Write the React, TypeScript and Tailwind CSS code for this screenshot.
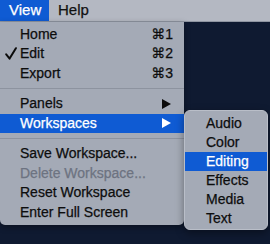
const font = { fontFamily: '"Liberation Sans", "DejaVu Sans", Arial, sans-serif' };

function Arrow({ white }: { white?: boolean }) {
  return (
    <svg width="9" height="10" viewBox="0 0 9 10" aria-hidden>
      <polygon points="0,0 9,5 0,10" fill={white ? "#ffffff" : "#0b0b0b"} />
    </svg>
  );
}

function Check() {
  return (
    <svg width="12" height="13" viewBox="0 0 12 13" aria-hidden>
      <path d="M1.2 7.4 L4.6 11.6 L10.9 1.2" fill="none" stroke="#0b0b0b" strokeWidth="2" strokeLinecap="round" strokeLinejoin="round" />
    </svg>
  );
}

type Row =
  | { kind: "sep" }
  | { kind: "item"; label: string; check?: boolean; key?: string; sub?: boolean; active?: boolean; disabled?: boolean };

const rows: Row[] = [
  { kind: "item", label: "Home", key: "⌘1" },
  { kind: "item", label: "Edit", key: "⌘2", check: true },
  { kind: "item", label: "Export", key: "⌘3" },
  { kind: "sep" },
  { kind: "item", label: "Panels", sub: true },
  { kind: "item", label: "Workspaces", sub: true, active: true },
  { kind: "sep" },
  { kind: "item", label: "Save Workspace..." },
  { kind: "item", label: "Delete Workspace...", disabled: true },
  { kind: "item", label: "Reset Workspace" },
  { kind: "item", label: "Enter Full Screen" },
];

const workspaces = ["Audio", "Color", "Editing", "Effects", "Media", "Text"];

export default function App() {
  return (
    <div
      className="relative h-[244px] w-[270px] overflow-hidden bg-[#0f1a31] text-[14px] [-webkit-text-stroke:0.25px_currentColor]"
      style={font}
    >
      <div className="flex h-[22px] items-stretch border-b border-[#8f95a1] bg-[#b4b8c2] text-[#111]">
        <div className="flex w-[49px] items-center bg-[#0f5bd3] pl-[9px] text-[15px] text-white">View</div>
        <div className="flex items-center pl-[9px] text-[15px]">Help</div>
      </div>

      <div className="absolute left-0 top-[22px] w-[184px] rounded-b-[5px] bg-[#a4aab6] pt-[2.5px] pb-[3px] text-[#0d0d0d] shadow-[0_2px_6px_rgba(0,0,0,0.35)]">
        {rows.map((r, i) =>
          r.kind === "sep" ? (
            <div key={i} className="flex h-[11px] items-center">
              <div className="h-px w-full bg-[#8d939f]" />
            </div>
          ) : (
            <div
              key={i}
              className={`relative flex h-[19.5px] items-center pl-[20px] pr-[11px] ${
                r.active ? "bg-[#0f5bd3] text-white" : r.disabled ? "text-[#6d7381]" : ""
              }`}
            >
              {r.check && (
                <span className="absolute left-[5px] top-[3px] flex">
                  <Check />
                </span>
              )}
              <span className="flex-1 whitespace-nowrap">{r.label}</span>
              {r.key && <span className="whitespace-nowrap">{r.key}</span>}
              {r.sub && (
                <span className="mr-[2px] flex items-center">
                  <Arrow white={r.active} />
                </span>
              )}
            </div>
          )
        )}
      </div>

      <div className="absolute left-[184px] top-[110px] w-[84px] rounded-[6px] border border-[#b9bec8] bg-[#a4aab6] pt-[3px] pb-[1px] text-[#0d0d0d] shadow-[0_3px_8px_rgba(0,0,0,0.4)]">
        {workspaces.map((w) => (
          <div
            key={w}
            className={`flex h-[19px] items-center pl-[21px] ${w === "Editing" ? "bg-[#0f5bd3] text-white" : ""}`}
          >
            {w}
          </div>
        ))}
      </div>
    </div>
  );
}
